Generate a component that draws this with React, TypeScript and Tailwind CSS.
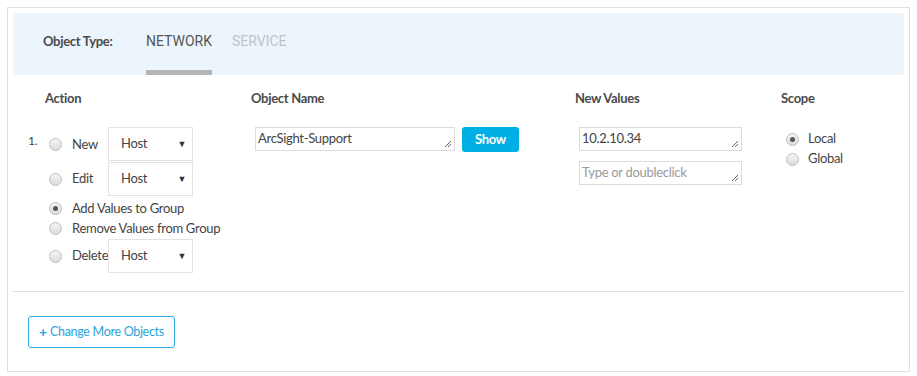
import React from "react";

const font = "font-['Lato','Open_Sans',sans-serif] tracking-[-0.3px]";

function Radio({ checked = false }: { checked?: boolean }) {
  return (
    <span className="w-[13px] h-[13px] rounded-full border border-[#bdbdbd] bg-gradient-to-b from-[#f4f4f4] to-[#dcdcdc] flex items-center justify-center shrink-0">
      {checked && <span className="w-[5px] h-[5px] rounded-full bg-[#555]" />}
    </span>
  );
}

function HostSelect() {
  return (
    <div className="w-[85px] h-[34px] border border-[#e3e3e3] bg-white flex items-center justify-between pl-[12px] pr-[6px] text-[13px] text-[#444]">
      <span>Host</span>
      <span className="text-[9px] text-[#333]">▼</span>
    </div>
  );
}

function Resize() {
  return (
    <svg className="absolute right-[2px] bottom-[2px]" width="8" height="8" viewBox="0 0 8 8">
      <path d="M7 1L1 7M7 4L4 7" stroke="#666" strokeWidth="1" />
    </svg>
  );
}

function TextArea({ value, placeholder, width }: { value?: string; placeholder?: string; width: string }) {
  return (
    <div className={`relative h-[24px] border border-[#dcdcdc] bg-white flex items-center pl-[2px] text-[13px] ${width}`}>
      {value ? <span className="text-[#444]">{value}</span> : <span className="text-[#9a9a9a]">{placeholder}</span>}
      <Resize />
    </div>
  );
}

export default function App() {
  return (
    <div className={`w-[917px] h-[376px] bg-white p-[7px] ${font}`}>
      <div className="h-[365px] border border-[#e0e0e0] p-[5px] flex flex-col">
        {/* Object type tabs */}
        <div className="h-[62px] bg-[#edf5fc] flex items-stretch pl-[30px]">
          <div className="w-[103px] flex items-center pb-[4px] text-[13px] font-bold text-[#4a4a4a]">Object Type:</div>
          <div className="flex flex-col justify-center border-b-[5px] border-[#b5b5b5] font-['Roboto',sans-serif] tracking-normal text-[14px] text-[#555] mr-[20px]">
            NETWORK
          </div>
          <div className="flex flex-col justify-center border-b-[5px] border-transparent font-['Roboto',sans-serif] tracking-normal text-[14px] text-[#c2c2c2]">
            SERVICE
          </div>
        </div>

        {/* Column headers */}
        <div className="flex pl-[15px] pt-[14px] h-[52px] text-[13px] font-bold text-[#4a4a4a]">
          <div className="w-[223px] pl-[17px]">Action</div>
          <div className="w-[324px]">Object Name</div>
          <div className="w-[206px]">New Values</div>
          <div>Scope</div>
        </div>

        {/* Row */}
        <div className="flex pl-[15px] h-[164px] text-[13px] text-[#444]">
          <div className="w-[223px] flex">
            <div className="w-[21px] pt-[5px] text-[12px]">1.</div>
            <div className="flex flex-col gap-[1px]">
              <div className="flex items-center h-[34px]">
                <Radio />
                <span className="ml-[10px] w-[36px] pt-[2px]">New</span>
                <HostSelect />
              </div>
              <div className="flex items-center h-[34px]">
                <Radio />
                <span className="ml-[10px] w-[36px]">Edit</span>
                <HostSelect />
              </div>
              <div className="flex items-center h-[19px] mt-[2px]">
                <Radio checked />
                <span className="ml-[10px]">Add Values to Group</span>
              </div>
              <div className="flex items-center h-[19px]">
                <Radio />
                <span className="ml-[10px]">Remove Values from Group</span>
              </div>
              <div className="flex items-center h-[34px]">
                <Radio />
                <span className="ml-[10px] w-[36px]">Delete</span>
                <HostSelect />
              </div>
            </div>
          </div>
          <div className="w-[324px] pl-[4px] flex items-start gap-[7px]">
            <TextArea value="ArcSight-Support" width="w-[200px]" />
            <button className="h-[25px] w-[57px] rounded-[3px] bg-[#00afe6] text-white font-bold text-[13px]">Show</button>
          </div>
          <div className="w-[206px] pl-[4px] flex flex-col gap-[10px]">
            <TextArea value="10.2.10.34" width="w-[163px]" />
            <TextArea placeholder="Type or doubleclick" width="w-[163px]" />
          </div>
          <div className="pl-[5px] pt-[3px] flex flex-col gap-[2px]">
            <div className="flex items-center h-[18px]">
              <Radio checked />
              <span className="ml-[9px]">Local</span>
            </div>
            <div className="flex items-center h-[18px]">
              <Radio />
              <span className="ml-[9px]">Global</span>
            </div>
          </div>
        </div>

        <div className="h-px bg-[#e0e0e0]" />

        <div className="pl-[15px] pt-[24px]">
          <button className="h-[32px] w-[147px] rounded-[3px] border border-[#2eaae2] text-[#2aa3dc] text-[12.5px] flex items-center justify-center gap-[3px]">
            <span className="font-bold text-[14px] leading-none">+</span>
            <span>Change More Objects</span>
          </button>
        </div>
      </div>
    </div>
  );
}
